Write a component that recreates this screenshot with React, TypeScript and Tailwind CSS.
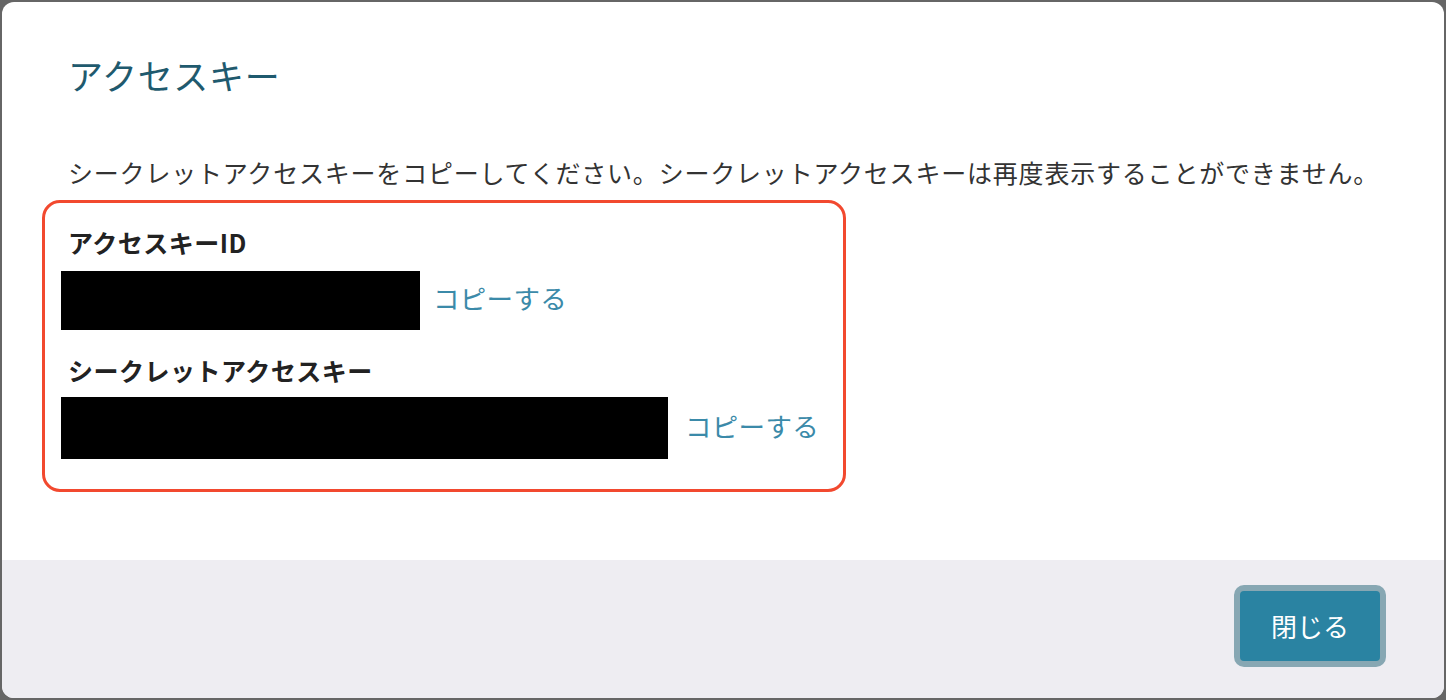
import React from "react";

const font = { fontFamily: '"Noto Sans CJK JP", "Noto Sans", sans-serif' };

interface KeyRowProps {
    label: string;
    maskWidth: string;
    maskHeight: string;
    maskGap: string;
    linkGap: string;
}

function KeyRow({ label, maskWidth, maskHeight, maskGap, linkGap }: KeyRowProps) {
    return (
        <div className="flex flex-col">
            <div className="ml-[7px] text-[25px] leading-[34px] font-bold tracking-[0.5px] text-[#222]">{label}</div>
            <div className={`flex items-center ${maskGap}`}>
                <div className={`bg-black ${maskWidth} ${maskHeight}`} />
                <button className={`${linkGap} pb-[5px] text-[26.5px] leading-[34px] tracking-[0.3px] text-[#3b8aa9]`}>コピーする</button>
            </div>
        </div>
    );
}

export default function App() {
    return (
        <div className="w-[1446px] h-[700px] bg-[#666] p-[2px]" style={font}>
            <div className="flex flex-col h-full bg-white rounded-[12px] overflow-hidden">

                {/* Body */}
                <div className="h-[558px] pl-[66px] pt-[53px]">
                    <h1 className="text-[35px] leading-[40px] font-normal tracking-[0.7px] text-[#1f5a6e]">アクセスキー</h1>
                    <p className="mt-[59px] text-[25px] leading-[36px] tracking-[0.8px] text-[#333]">
                        シークレットアクセスキーをコピーしてください。シークレットアクセスキーは再度表示することができません。
                    </p>

                    {/* Highlighted keys */}
                    <div className="-ml-[26px] mt-[10px] w-[804px] h-[292px] border-[3px] border-[#f2492f] rounded-[18px] pl-[16px] pt-[22px] flex flex-col">
                        <KeyRow label="アクセスキーID" maskWidth="w-[359px]" maskHeight="h-[59px]" maskGap="mt-[12px]" linkGap="ml-[13px]" />
                        <div className="mt-[23px]">
                            <KeyRow label="シークレットアクセスキー" maskWidth="w-[607px]" maskHeight="h-[62px]" maskGap="mt-[10px]" linkGap="ml-[17px]" />
                        </div>
                    </div>
                </div>

                {/* Footer */}
                <div className="flex-1 bg-[#eeedf2] flex justify-end items-start pt-[25px] pr-[58px]">
                    <button className="w-[152px] h-[82px] rounded-[10px] border-[6px] border-[#87a7b3] bg-[#2a83a2] text-white text-[26px] leading-none flex items-center justify-center">
                        閉じる
                    </button>
                </div>

            </div>
        </div>
    );
}
